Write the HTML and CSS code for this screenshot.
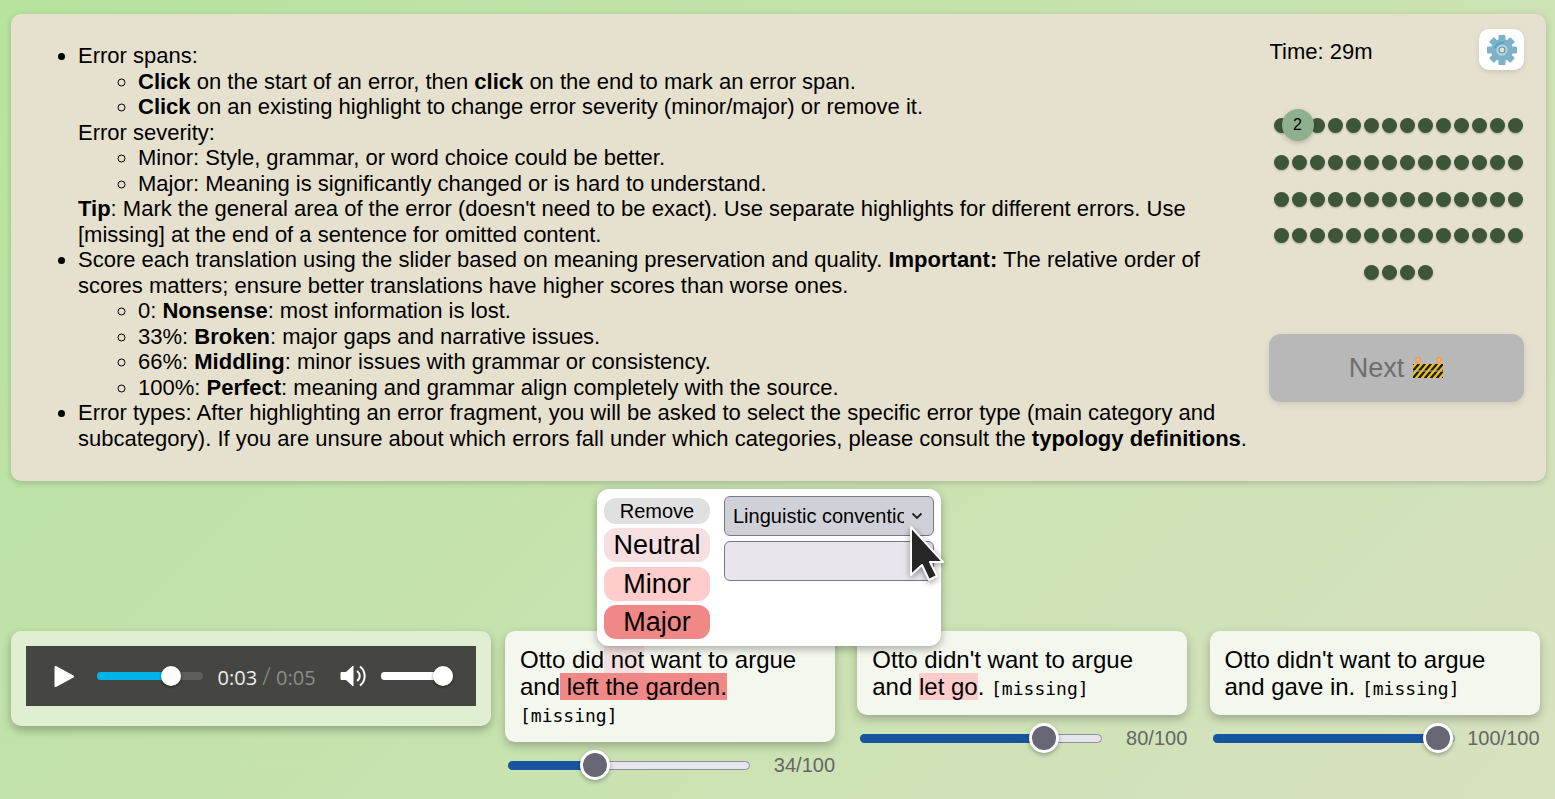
FILE: index.html
```html
<!DOCTYPE html>
<html lang="en">
<head>
    <meta charset="UTF-8">
    <meta name="viewport" content="width=device-width, initial-scale=1.0">
    <title>Translation annotation</title>
    <link rel="stylesheet" href="styles.css">
</head>
<body>
    <!-- Instructions and progress -->
    <section class="panel">
        <ul class="guide">
            <li>Error spans:
                <ul>
                    <li><b>Click</b> on the start of an error, then <b>click</b> on the end to mark an error span.</li>
                    <li><b>Click</b> on an existing highlight to change error severity (minor/major) or remove it.</li>
                </ul>
                Error severity:
                <ul>
                    <li>Minor: Style, grammar, or word choice could be better.</li>
                    <li>Major: Meaning is significantly changed or is hard to understand.</li>
                </ul>
                <b>Tip</b>: Mark the general area of the error (doesn't need to be exact). Use separate highlights for different errors. Use [missing] at the end of a sentence for omitted content.
            </li>
            <li>Score each translation using the slider based on meaning preservation and quality. <b>Important:</b> The relative order of scores matters; ensure better translations have higher scores than worse ones.
                <ul>
                    <li>0: <b>Nonsense</b>: most information is lost.</li>
                    <li>33%: <b>Broken</b>: major gaps and narrative issues.</li>
                    <li>66%: <b>Middling</b>: minor issues with grammar or consistency.</li>
                    <li>100%: <b>Perfect</b>: meaning and grammar align completely with the source.</li>
                </ul>
            </li>
            <li>Error types: After highlighting an error fragment, you will be asked to select the specific error type (main category and subcategory). If you are unsure about which errors fall under which categories, please consult the <b>typology definitions</b>.</li>
        </ul>

        <aside class="side">
            <div class="side-top">
                <span class="time">Time: 29m</span>
                <button class="settings" aria-label="Settings">
                    <svg width="32" height="32" viewBox="0 0 32 32">
                        <g fill="#7fb1c8">
                            <rect x="12.5" y="1" width="7" height="30" rx="1"/>
                            <rect x="12.5" y="1" width="7" height="30" rx="1" transform="rotate(45 16 16)"/>
                            <rect x="12.5" y="1" width="7" height="30" rx="1" transform="rotate(90 16 16)"/>
                            <rect x="12.5" y="1" width="7" height="30" rx="1" transform="rotate(135 16 16)"/>
                            <circle cx="16" cy="16" r="11"/>
                        </g>
                        <path d="M8 14a8.500 8.500 0 0 1 10-6.500l-1 3a5.500 5.500 0 0 0-6 4z" fill="#5aa6c9"/>
                        <circle cx="16" cy="16" r="5.500" fill="#bcd6e2"/>
                        <circle cx="16" cy="16" r="3.600" fill="#5f93ab"/>
                        <circle cx="16" cy="16" r="2.400" fill="#e6e1cf"/>
                    </svg>
                </button>
            </div>

            <div class="dots">
                <span class="dot"></span><span class="dot current">2</span><span class="dot"></span><span class="dot"></span><span class="dot"></span><span class="dot"></span><span class="dot"></span><span class="dot"></span><span class="dot"></span><span class="dot"></span><span class="dot"></span><span class="dot"></span><span class="dot"></span><span class="dot"></span>
                <span class="dot"></span><span class="dot"></span><span class="dot"></span><span class="dot"></span><span class="dot"></span><span class="dot"></span><span class="dot"></span><span class="dot"></span><span class="dot"></span><span class="dot"></span><span class="dot"></span><span class="dot"></span><span class="dot"></span><span class="dot"></span>
                <span class="dot"></span><span class="dot"></span><span class="dot"></span><span class="dot"></span><span class="dot"></span><span class="dot"></span><span class="dot"></span><span class="dot"></span><span class="dot"></span><span class="dot"></span><span class="dot"></span><span class="dot"></span><span class="dot"></span><span class="dot"></span>
                <span class="dot"></span><span class="dot"></span><span class="dot"></span><span class="dot"></span><span class="dot"></span><span class="dot"></span><span class="dot"></span><span class="dot"></span><span class="dot"></span><span class="dot"></span><span class="dot"></span><span class="dot"></span><span class="dot"></span><span class="dot"></span>
                <span class="dot"></span><span class="dot"></span><span class="dot"></span><span class="dot"></span>
            </div>

            <button class="next" disabled>
                Next
                <svg width="32" height="24" viewBox="0 0 32 24">
                    <defs>
                        <pattern id="hazard" width="6" height="6" patternUnits="userSpaceOnUse" patternTransform="skewX(-40)">
                            <rect width="6" height="6" fill="#f2c200"/>
                            <rect width="3" height="6" fill="#1c1c1c"/>
                        </pattern>
                    </defs>
                    <circle cx="6" cy="4" r="3" fill="#f5a03c"/>
                    <circle cx="6" cy="4" r="1.400" fill="#f4b0a0"/>
                    <circle cx="27" cy="4" r="3" fill="#f5a03c"/>
                    <circle cx="27" cy="4" r="1.400" fill="#f4b0a0"/>
                    <rect x="1" y="8" width="30" height="6.500" fill="url(#hazard)"/>
                    <rect x="1" y="15.500" width="30" height="6.500" fill="url(#hazard)"/>
                </svg>
            </button>
        </aside>
    </section>

    <!-- Audio and translations -->
    <section class="items">
        <div class="audio-card">
            <div class="player">
                <svg class="play" width="20" height="21" viewBox="0 0 20 21"><path d="M1.500 1 19 10.500 1.500 20z" fill="#fff" stroke="#fff" stroke-width="2" stroke-linejoin="round"/></svg>
                <div class="seek"><div class="seek-fill" style="width: 74px"></div></div>
                <div class="clock">0:03 <span class="slash">/</span> <span class="total">0:05</span></div>
                <svg class="speaker" width="26" height="24" viewBox="0 0 26 24">
                    <path d="M1 8.500h5L13 2v20l-7-6.500H1z" fill="#fff" stroke="#fff" stroke-linejoin="round"/>
                    <path d="M17 7a6 6 0 0 1 0 10M20 2.500a12 12 0 0 1 0 19" fill="none" stroke="#fff" stroke-width="2"/>
                </svg>
                <div class="volume"><div class="volume-fill" style="width: 62px"></div></div>
            </div>
        </div>

        <div class="item">
            <p class="card">Otto did<span class="neutral"> not</span> want to argue and<span class="major"> left the garden.</span> <code>[missing]</code></p>
            <div class="score">
                <div class="slider"><div class="slider-fill" style="width: 87px"></div></div>
                <span class="value">34/100</span>
            </div>
        </div>

        <div class="item">
            <p class="card">Otto didn't want to argue and <span class="minor">let go</span>. <code>[missing]</code></p>
            <div class="score">
                <div class="slider"><div class="slider-fill" style="width: 184px"></div></div>
                <span class="value">80/100</span>
            </div>
        </div>

        <div class="item">
            <p class="card">Otto didn't want to argue and gave in. <code>[missing]</code></p>
            <div class="score">
                <div class="slider"><div class="slider-fill" style="width: 225px"></div></div>
                <span class="value">100/100</span>
            </div>
        </div>
    </section>

    <!-- Severity menu, open over the first translation -->
    <div class="menu">
        <div class="severity">
            <button class="remove">Remove</button>
            <button class="sev neutral-btn">Neutral</button>
            <button class="sev minor-btn">Minor</button>
            <button class="sev major-btn">Major</button>
        </div>
        <div class="types">
            <div class="select-wrap">
                <select class="type-select"><option>Linguistic conventions</option></select>
                <svg class="chevron" width="12" height="8" viewBox="0 0 12 8"><path d="M1.500 1.500 6 6l4.500-4.500" fill="none" stroke="#222" stroke-width="1.800"/></svg>
            </div>
            <select class="type-select empty"><option></option></select>
        </div>
    </div>

    <svg class="cursor" width="38" height="60" viewBox="0 0 38 60">
        <path d="M3 2v48l11-10 7 15 8-4-7-14h13z" fill="#262626" stroke="#fff" stroke-width="2" stroke-linejoin="round"/>
    </svg>
</body>
</html>
```

FILE: styles.css
```css
html {
    height: 100%;
}

body {
    margin: 0;
    padding: 14px 9px 0 10.5px;
    min-height: 100vh;
    box-sizing: border-box;
    position: relative;
    overflow: hidden;
    background: linear-gradient(135deg, #b6e39e, #d8e2c0);
    font-family: "Liberation Sans", Arial, sans-serif;
    font-size: 22px;
    color: #000;
}

.panel {
    display: flex;
    padding: 15px 22px 30px 7.5px;
    background: #e6e1cf;
    border-radius: 10px;
    box-shadow: 0 2px 6px rgba(0, 0, 0, 0.18);
}

.guide {
    flex: 1;
    margin: 14px 0 0;
    padding-left: 60px;
    line-height: 25.5px;
}

.guide ul {
    margin: 0;
    padding-left: 60px;
}

.side {
    width: 255px;
    margin-left: 19px;
    flex-shrink: 0;
}

.side-top {
    display: flex;
    justify-content: space-between;
    align-items: center;
}

.time {
    padding: 4px 0 0 0.5px;
}

.settings {
    display: flex;
    align-items: center;
    justify-content: center;
    width: 45px;
    height: 41px;
    padding: 0;
    border: none;
    border-radius: 10px;
    background: #fff;
    box-shadow: 0 2px 5px rgba(0, 0, 0, 0.12);
}

.dots {
    display: flex;
    flex-wrap: wrap;
    justify-content: center;
    row-gap: 21.75px;
    width: 252px;
    margin: 48px 0 0 3px;
}

.dot {
    width: 15px;
    height: 15px;
    margin: 0 1.5px;
    border-radius: 50%;
    background: #3d5637;
    box-shadow: 0 1px 2px rgba(0, 0, 0, 0.25);
}

.dot.current {
    position: relative;
    display: flex;
    align-items: center;
    justify-content: center;
    width: 32px;
    height: 32px;
    margin: -9px -5.5px -8px -8.5px;
    background: #8fb08f;
    box-shadow: 0 2px 5px rgba(0, 0, 0, 0.2);
    font-size: 16px;
}

.next {
    display: flex;
    align-items: center;
    justify-content: center;
    gap: 8px;
    width: 255px;
    height: 68px;
    margin-top: 54px;
    padding: 0;
    border: none;
    border-radius: 12px;
    background: #b8b8b8;
    box-shadow: 0 2px 6px rgba(0, 0, 0, 0.12);
    font-family: inherit;
    font-size: 27px;
    color: #6e6e6e;
}

.items {
    display: flex;
    align-items: flex-start;
    margin-top: 150px;
}

.audio-card {
    width: 480px;
    margin-right: 14.5px;
    padding: 15px 15px 20px;
    box-sizing: border-box;
    background: #e0eed2;
    border-radius: 10px;
    box-shadow: 0 4px 10px rgba(0, 0, 0, 0.28);
}

.player {
    display: flex;
    align-items: center;
    height: 60px;
    padding-left: 28px;
    background: #454641;
    color: #fff;
}

.seek {
    width: 106px;
    height: 8px;
    margin-left: 23px;
    border-radius: 4px;
    background: #5d5e5a;
}

.seek-fill {
    position: relative;
    height: 100%;
    border-radius: 4px;
    background: #00b4e8;
}

.seek-fill::after,
.volume-fill::after {
    content: "";
    position: absolute;
    top: -6px;
    right: -10px;
    width: 20px;
    height: 20px;
    border-radius: 50%;
    background: #fff;
    box-shadow: 0 1px 3px rgba(0, 0, 0, 0.5);
}

.clock {
    width: 122px;
    margin-left: 15px;
    font-family: "Open Sans", sans-serif;
    font-size: 20px;
    line-height: 24px;
    color: #eee;
}

.slash {
    font-size: 25px;
    font-weight: 300;
    line-height: 24px;
    color: #8b8c88;
}

.total {
    color: #8b8c88;
}

.volume {
    width: 72px;
    height: 8px;
    margin-left: 15px;
    border-radius: 4px;
    background: #d8d8d6;
}

.volume-fill {
    position: relative;
    height: 100%;
    border-radius: 4px;
    background: #fff;
}

.item {
    width: 330px;
    margin-right: 22.25px;
}

.item:last-child {
    margin-right: 0;
}

.card {
    margin: 0;
    padding: 15px;
    background: #f4f7ee;
    border-radius: 10px;
    box-shadow: 0 4px 10px rgba(0, 0, 0, 0.25);
    font-size: 24px;
    line-height: 27px;
}

.card code {
    font-family: "DejaVu Sans Mono", monospace;
    font-size: 18px;
    line-height: 1;
}

.neutral { background: #f5dfe0; }
.minor { background: #ffcccc; }
.major { background: #f08888; }

.score {
    display: flex;
    align-items: center;
    justify-content: space-between;
    height: 30px;
    margin-top: 8px;
    padding-left: 3px;
}

.slider {
    width: 242px;
    height: 9px;
    box-sizing: border-box;
    border: 1px solid #8d8d9c;
    border-radius: 5px;
    background: #e6e5eb;
}

.slider-fill {
    position: relative;
    height: 9px;
    margin: -1px 0 0 -1px;
    border-radius: 5px 0 0 5px;
    background: #18559f;
}

.slider-fill::after {
    content: "";
    position: absolute;
    top: -10.5px;
    right: -15px;
    width: 30px;
    height: 30px;
    box-sizing: border-box;
    border: 3px solid #fff;
    border-radius: 50%;
    background: #666674;
    box-shadow: 0 2px 4px rgba(0, 0, 0, 0.3);
}

.value {
    font-size: 20px;
    color: #666;
}

.menu {
    position: absolute;
    top: 489px;
    left: 597px;
    display: flex;
    width: 344px;
    height: 157px;
    padding: 7px;
    box-sizing: border-box;
    background: #fff;
    border-radius: 12px;
    box-shadow: 0 3px 8px rgba(0, 0, 0, 0.3);
}

.severity {
    display: flex;
    flex-direction: column;
    gap: 4.5px;
    width: 106px;
    padding-top: 2px;
}

.severity button {
    padding: 1px 0 0;
    border: none;
    border-radius: 12px;
    font-family: inherit;
    color: #000;
}

.remove {
    height: 26px;
    background: #e0e0e0;
    font-size: 20px;
}

.sev {
    height: 34px;
    font-size: 27px;
}

.neutral-btn { background: #f5dfe0; }
.minor-btn { background: #ffcccc; }
.major-btn { background: #f08888; }

.types {
    display: flex;
    flex-direction: column;
    gap: 5px;
    margin-left: 14px;
}

.select-wrap {
    position: relative;
    height: 40px;
}

.type-select {
    appearance: none;
    display: block;
    width: 210px;
    height: 40px;
    padding: 0 29px 0 8px;
    border: 1.5px solid #77778a;
    border-radius: 6px;
    background-color: #d0d0d8;
    font-family: inherit;
    font-size: 20px;
    color: #000;
}

.type-select.empty {
    background-color: #e8e6ec;
}

.chevron {
    position: absolute;
    top: 16px;
    right: 11px;
}

.cursor {
    position: absolute;
    top: 525px;
    left: 908px;
    filter: drop-shadow(0 2px 3px rgba(0, 0, 0, 0.4));
}
```
